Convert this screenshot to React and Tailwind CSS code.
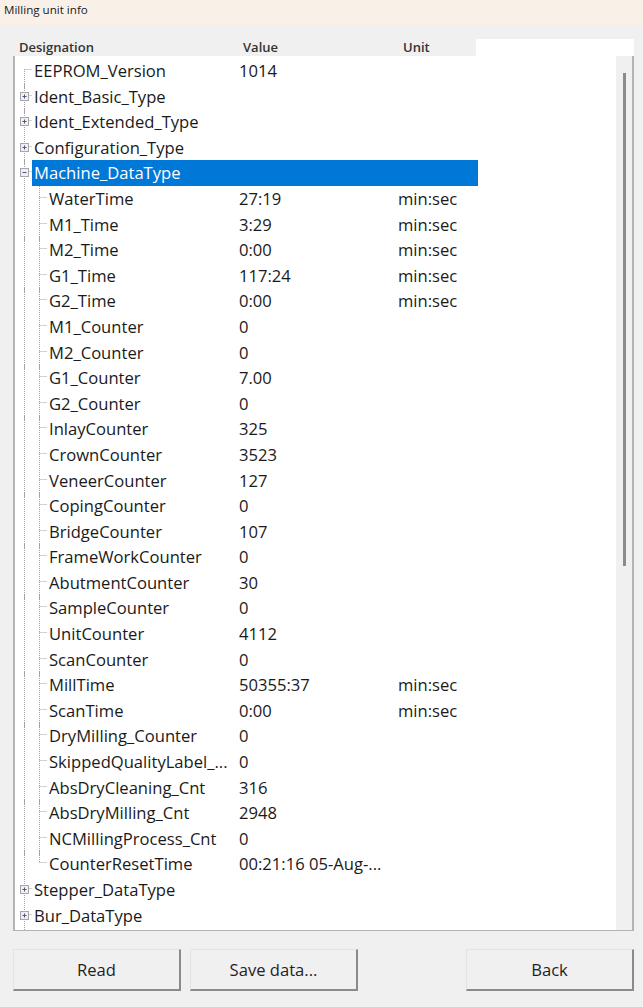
const roots1 = [
  ["EEPROM_Version", "1014", "", "leaf"],
  ["Ident_Basic_Type", "", "", "plus"],
  ["Ident_Extended_Type", "", "", "plus"],
  ["Configuration_Type", "", "", "plus"],
];
const children = [
  ["WaterTime", "27:19", "min:sec"],
  ["M1_Time", "3:29", "min:sec"],
  ["M2_Time", "0:00", "min:sec"],
  ["G1_Time", "117:24", "min:sec"],
  ["G2_Time", "0:00", "min:sec"],
  ["M1_Counter", "0", ""],
  ["M2_Counter", "0", ""],
  ["G1_Counter", "7.00", ""],
  ["G2_Counter", "0", ""],
  ["InlayCounter", "325", ""],
  ["CrownCounter", "3523", ""],
  ["VeneerCounter", "127", ""],
  ["CopingCounter", "0", ""],
  ["BridgeCounter", "107", ""],
  ["FrameWorkCounter", "0", ""],
  ["AbutmentCounter", "30", ""],
  ["SampleCounter", "0", ""],
  ["UnitCounter", "4112", ""],
  ["ScanCounter", "0", ""],
  ["MillTime", "50355:37", "min:sec"],
  ["ScanTime", "0:00", "min:sec"],
  ["DryMilling_Counter", "0", ""],
  ["SkippedQualityLabel_...", "0", ""],
  ["AbsDryCleaning_Cnt", "316", ""],
  ["AbsDryMilling_Cnt", "2948", ""],
  ["NCMillingProcess_Cnt", "0", ""],
  ["CounterResetTime", "00:21:16 05-Aug-...", ""],
];
const dots = { stroke: "#a3a3a3", strokeWidth: 1, strokeDasharray: "1 1", fill: "none" };

function Expander({ open }) {
  return (
    <g>
      <rect x="5.5" y="8.5" width="8" height="8" fill="#eef0f4" stroke="#a6a6a6" />
      <path d="M7.5 12.5h4" stroke="#4a5a78" fill="none" />
      {!open && <path d="M9.5 10.5v4" stroke="#4a5a78" fill="none" />}
    </g>
  );
}

function RootGutter({ kind, first, open }) {
  return (
    <svg width="17" height="26" className="block shrink-0 overflow-visible">
      <path d={first ? "M9.5 11V30" : "M9.5 0V30"} {...dots} />
      <path d="M9.5 11.5H17" {...dots} />
      {kind !== "leaf" && <Expander open={open} />}
    </svg>
  );
}

function ChildGutter({ last }) {
  return (
    <svg width="32" height="26" className="block shrink-0 overflow-visible">
      <path d="M9.5 0V30" {...dots} />
      <path d={last ? "M24.5 0V12" : "M24.5 0V30"} {...dots} />
      <path d="M24.5 11.5H32" {...dots} />
    </svg>
  );
}

function Cells({ label, value, unit, labelW }) {
  return (
    <>
      <div className="pl-[2px] shrink-0" style={{ width: labelW }}>{label}</div>
      <div className="w-[159px] shrink-0">{value}</div>
      <div className="shrink-0">{unit}</div>
    </>
  );
}

function Btn({ children, className = "" }) {
  return (
    <button className={"w-[168px] h-[42px] pt-[2px] bg-[#f0f0f0] border border-t-[#e3e3e3] border-l-[#e3e3e3] border-r-[#8a8a8a] border-b-[#8a8a8a] border-r-2 border-b-2 text-[16.6px] text-[#1f1f1f] " + className}>
      {children}
    </button>
  );
}

export default function App() {
  const font = { fontFamily: '"Open Sans", "Noto Sans", sans-serif' };
  return (
    <div className="w-[643px] h-[1007px] bg-[#f0f0f0] overflow-hidden flex flex-col text-[#1a1a1a]" style={font}>
      <div className="h-[25px] bg-[#f9f1e7] pl-[4px] pt-[1px] text-[11.6px] leading-[18px] shrink-0">Milling unit info</div>
      <div className="pt-[14px] pl-[13px] pr-[9px]">
        <div className="flex h-[17px] text-[13px] leading-[17px] font-semibold text-[#333]">
          <div className="w-[230px] pl-[6px] shrink-0">Designation</div>
          <div className="w-[160px] shrink-0">Value</div>
          <div className="w-[73px] shrink-0">Unit</div>
          <div className="flex-1 bg-white" />
        </div>
        <div className="h-[875px] border-l-2 border-r-2 border-b border-[#b4b4b4] bg-white flex overflow-hidden">
          <div className="flex-1 pt-[2px] text-[16.6px] leading-[25.6px] overflow-hidden">
            {roots1.map((r, i) => (
              <div key={r[0]} className="flex h-[25.6px]">
                <RootGutter kind={r[3]} first={i === 0} />
                <Cells label={r[0]} value={r[1]} unit={r[2]} labelW={207} />
              </div>
            ))}
            <div className="flex h-[25.6px]">
              <RootGutter kind="minus" open />
              <div className="w-[446px] bg-[#0078d7] text-white pl-[2px]">Machine_DataType</div>
            </div>
            {children.map((c, i) => (
              <div key={c[0]} className="flex h-[25.6px]">
                <ChildGutter last={i === children.length - 1} />
                <Cells label={c[0]} value={c[1]} unit={c[2]} labelW={192} />
              </div>
            ))}
            {["Stepper_DataType", "Bur_DataType"].map((l) => (
              <div key={l} className="flex h-[25.6px]">
                <RootGutter kind="plus" />
                <div className="pl-[2px]">{l}</div>
              </div>
            ))}
          </div>
          <div className="w-[16px] shrink-0 bg-[#f0f0f0] flex justify-center pt-[17px]">
            <div className="w-[3px] h-[493px] bg-[#8b8b8b]" />
          </div>
        </div>
        <div className="flex mt-[18px]">
          <Btn>Read</Btn>
          <Btn className="ml-[9px]">Save data...</Btn>
          <Btn className="ml-auto">Back</Btn>
        </div>
      </div>
    </div>
  );
}
